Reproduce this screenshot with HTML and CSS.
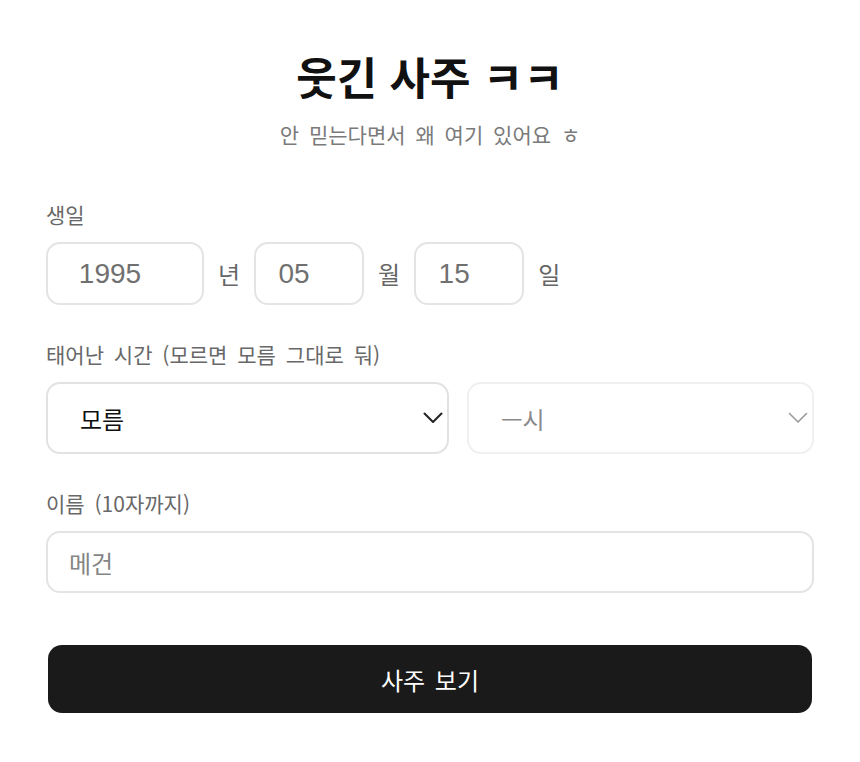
FILE: index.html
```html
<!DOCTYPE html>
<html lang="ko">
<head>
<meta charset="utf-8">
<title>웃긴 사주</title>
<link rel="stylesheet" href="styles.css">
</head>
<body>
<main class="page">
  <header class="hero">
    <h1 class="title">웃긴 사주 ㅋㅋ</h1>
    <p class="subtitle">안 믿는다면서 왜 여기 있어요 ㅎ</p>
  </header>

  <form class="form">
    <div class="field">
      <label class="label">생일</label>
      <div class="date-row">
        <input class="box date date-year" type="text" placeholder="1995">
        <span class="unit">년</span>
        <input class="box date date-small" type="text" placeholder="05">
        <span class="unit">월</span>
        <input class="box date date-small" type="text" placeholder="15">
        <span class="unit">일</span>
      </div>
    </div>

    <div class="field">
      <label class="label">태어난 시간 (모르면 모름 그대로 둬)</label>
      <div class="time-row">
        <div class="select-wrap">
          <select class="box select">
            <option>모름</option>
          </select>
          <svg class="chevron" width="20" height="12" viewBox="0 0 20 12"><path d="M1.5 1.5 L10 10 L18.5 1.5" fill="none" stroke="#222" stroke-width="2" stroke-linecap="round" stroke-linejoin="round"/></svg>
        </div>
        <div class="select-wrap">
          <select class="box select select-off" disabled>
            <option>—시</option>
          </select>
          <svg class="chevron" width="20" height="12" viewBox="0 0 20 12"><path d="M1.5 1.5 L10 10 L18.5 1.5" fill="none" stroke="#9a9a9a" stroke-width="1.6" stroke-linecap="round" stroke-linejoin="round"/></svg>
        </div>
      </div>
    </div>

    <div class="field">
      <label class="label">이름 (10자까지)</label>
      <input class="box name" type="text" placeholder="메건">
    </div>

    <button class="submit" type="button">사주 보기</button>
  </form>
</main>
</body>
</html>
```

FILE: styles.css
```css
* { box-sizing: border-box; }

html, body {
  margin: 0;
  padding: 0;
  background: #ffffff;
}

body {
  font-family: "Noto Sans CJK KR", "Noto Sans", sans-serif;
  color: #111;
}

.page {
  width: 768px;
  margin: 0 auto;
  padding-top: 48px;
}

.hero {
  text-align: center;
}

.title {
  margin: 0;
  font-size: 44px;
  line-height: 56px;
  font-weight: 700;
  color: #111;
}

.subtitle {
  margin: 16px 0 0;
  font-size: 21px;
  line-height: 28px;
  word-spacing: 4px;
  color: #7a7a7a;
}

.form {
  margin-top: 52px;
  display: flex;
  flex-direction: column;
  gap: 35px;
}

.field {
  display: flex;
  flex-direction: column;
  gap: 14px;
}

.label {
  font-size: 21px;
  line-height: 28px;
  word-spacing: 4px;
  color: #686868;
}

.box {
  border: 2px solid #e4e4e4;
  border-radius: 14px;
  background: #fff;
  outline: none;
  font-family: inherit;
}

.date-row {
  display: flex;
  align-items: center;
  gap: 14px;
}

.date {
  height: 63px;
  font-family: "Liberation Sans", "Noto Sans CJK KR", sans-serif;
  font-size: 28px;
  text-align: center;
  padding: 0 42px 0 12px;
  color: #707070;
}

.date::placeholder { color: #707070; opacity: 1; }

.date-year { width: 158px; }
.date-small { width: 110px; }

.unit {
  font-size: 24px;
  line-height: 32px;
  color: #666;
}

.time-row {
  display: grid;
  grid-template-columns: 403px 1fr;
  gap: 18px;
}

.select-wrap {
  position: relative;
}

.select {
  width: 100%;
  height: 72px;
  appearance: none;
  -webkit-appearance: none;
  padding: 0 40px 0 32px;
  font-size: 24px;
  color: #111;
  border-color: #e2e2e2;
}

.select-off {
  color: #8a8a8a;
  border-color: #f0f0f0;
  opacity: 1;
}

.chevron {
  position: absolute;
  right: 6px;
  top: 30px;
  pointer-events: none;
}

.name {
  width: 100%;
  height: 62px;
  padding: 0 21px;
  font-size: 24px;
  color: #111;
}

.name::placeholder { color: #858585; opacity: 1; }

.submit {
  margin: 17px 2px 0;
  height: 68px;
  border: none;
  border-radius: 14px;
  background: #1a1a1a;
  color: #fff;
  font-family: inherit;
  font-size: 24px;
  word-spacing: 3px;
}
```
